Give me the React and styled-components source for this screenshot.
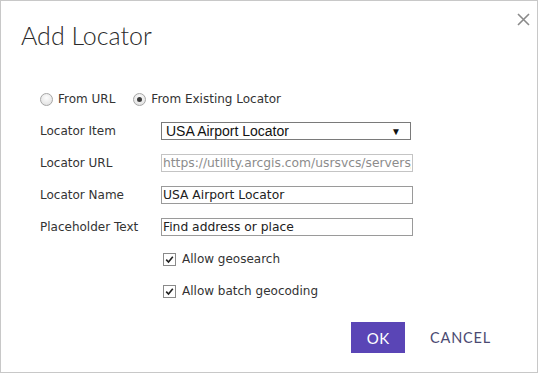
import React from 'react';
import styled, { createGlobalStyle } from 'styled-components';

const GlobalStyle = createGlobalStyle`
  body {
    margin: 0;
    background: #ffffff;
  }
`;

const Dialog = styled.div`
  box-sizing: border-box;
  width: 538px;
  height: 373px;
  border: 1px solid #c8c8c8;
  background: #ffffff;
  display: flex;
  flex-direction: column;
`;

const Header = styled.div`
  display: flex;
  justify-content: space-between;
  align-items: flex-start;
  padding: 19px 6px 0 20px;
`;

const Title = styled.h1`
  margin: 0;
  font-family: Lato, "Open Sans", sans-serif;
  font-weight: 300;
  font-size: 25px;
  line-height: 30px;
  color: #2a2a2a;
`;

const Close = styled.button`
  border: 0;
  background: none;
  padding: 0;
  margin-top: -9px;
  width: 16px;
  height: 16px;
  display: flex;
  align-items: center;
  justify-content: center;
  cursor: pointer;
`;

const Form = styled.div`
  padding: 33px 0 0 39px;
  font-family: "DejaVu Sans", Verdana, sans-serif;
  font-size: 12px;
  color: #333;
`;

const Row = styled.div`
  height: 32px;
  display: flex;
  align-items: center;
  padding-left: ${(p) => p.$indent || 0}px;
`;

const Label = styled.div`
  width: 121px;
  flex-shrink: 0;
`;

const Option = styled.label`
  display: flex;
  align-items: center;
  gap: 5px;
  margin-right: 18px;
`;

const Radio = styled.span`
  box-sizing: border-box;
  width: 13px;
  height: 13px;
  border-radius: 50%;
  border: 1px solid #a6a6a6;
  background: radial-gradient(circle at 50% 35%, #fdfdfd, #dcdcdc);
  display: flex;
  align-items: center;
  justify-content: center;
  &::after {
    content: '';
    width: 5px;
    height: 5px;
    border-radius: 50%;
    background: ${(p) => (p.$checked ? '#3c3c3c' : 'transparent')};
  }
`;

const Select = styled.div`
  box-sizing: border-box;
  width: 250px;
  height: 18px;
  border: 1px solid #7a7a7a;
  display: flex;
  align-items: center;
  justify-content: space-between;
  padding: 0 9px 0 4px;
  font-family: "Liberation Sans", Arial, sans-serif;
  font-size: 14px;
  color: #111;
`;

const Arrow = styled.span`
  font-size: 10px;
  color: #111;
`;

const Input = styled.input`
  box-sizing: border-box;
  width: 252px;
  height: 18px;
  margin: 0;
  padding: 0 1px;
  border: 1px solid ${(p) => (p.$muted ? '#c4c4c4' : '#9a9a9a')};
  font-family: "DejaVu Sans", Verdana, sans-serif;
  font-size: 12.3px;
  color: ${(p) => (p.$muted ? '#8c8c8c' : '#222')};
  background: #fff;
  outline: none;
`;

const Check = styled.label`
  display: flex;
  align-items: center;
  gap: 6px;
`;

const Box = styled.span`
  box-sizing: border-box;
  width: 13px;
  height: 13px;
  border: 1px solid #8a8a8a;
  background: #fff;
  display: flex;
  align-items: center;
  justify-content: center;
`;

const Footer = styled.div`
  display: flex;
  justify-content: flex-end;
  align-items: center;
  gap: 13px;
  padding: 15px 34px 0 0;
`;

const Primary = styled.button`
  width: 54px;
  height: 31px;
  border: 0;
  background: #5a45b6;
  color: #fff;
  font-family: Lato, "Open Sans", sans-serif;
  font-size: 15px;
  letter-spacing: 0.5px;
  cursor: pointer;
`;

const Secondary = styled.button`
  height: 31px;
  border: 0;
  background: none;
  padding: 0 12px;
  color: #4b4a72;
  font-family: Lato, "Open Sans", sans-serif;
  font-size: 14.5px;
  letter-spacing: 0.8px;
  cursor: pointer;
`;

const Tick = () => (
  <svg width="9" height="9" viewBox="0 0 9 9">
    <path d="M1.2 4.6 L3.5 7 L7.8 1.8" fill="none" stroke="#222" strokeWidth="1.6" />
  </svg>
);

export default function App() {
  return (
    <>
      <GlobalStyle />
      <Dialog>
        <Header>
          <Title>Add Locator</Title>
          <Close aria-label="Close">
            <svg width="13" height="13" viewBox="0 0 13 13">
              <path d="M1 1 L12 12 M12 1 L1 12" stroke="#8a8a8a" strokeWidth="1.6" />
            </svg>
          </Close>
        </Header>
        <Form>
          <Row>
            <Option>
              <Radio />
              From URL
            </Option>
            <Option>
              <Radio $checked />
              From Existing Locator
            </Option>
          </Row>
          <Row>
            <Label>Locator Item</Label>
            <Select>
              USA Airport Locator
              <Arrow>▼</Arrow>
            </Select>
          </Row>
          <Row>
            <Label>Locator URL</Label>
            <Input $muted readOnly value="https://utility.arcgis.com/usrsvcs/servers/4d" />
          </Row>
          <Row>
            <Label>Locator Name</Label>
            <Input readOnly value="USA Airport Locator" />
          </Row>
          <Row>
            <Label>Placeholder Text</Label>
            <Input readOnly value="Find address or place" />
          </Row>
          <Row $indent={123}>
            <Check>
              <Box><Tick /></Box>
              Allow geosearch
            </Check>
          </Row>
          <Row $indent={123}>
            <Check>
              <Box><Tick /></Box>
              Allow batch geocoding
            </Check>
          </Row>
        </Form>
        <Footer>
          <Primary>OK</Primary>
          <Secondary>CANCEL</Secondary>
        </Footer>
      </Dialog>
    </>
  );
}
